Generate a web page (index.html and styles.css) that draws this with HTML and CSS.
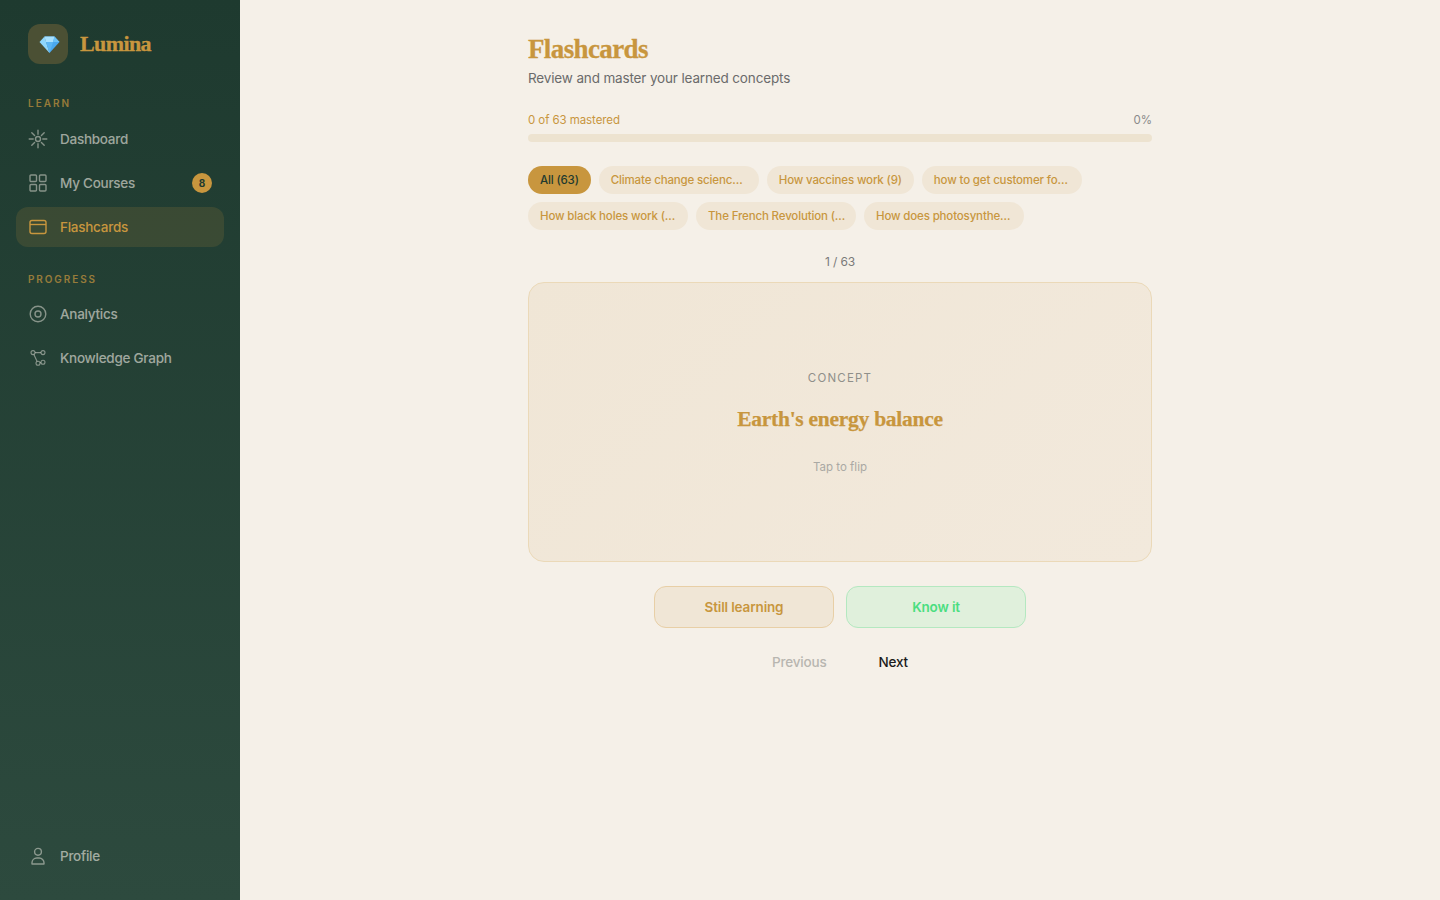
FILE: index.html
```html
<!DOCTYPE html>
<html lang="en">
<head>
<meta charset="utf-8">
<title>Lumina Flashcards</title>
<link rel="stylesheet" href="styles.css">
</head>
<body>
<div class="app">
  <aside class="sidebar">
    <div class="brand">
      <div class="logo">
        <svg class="gem" viewBox="0 0 20 20">
          <polygon points="5,2.5 15,2.5 20,8 10,19" fill="#4aa8ee"/>
          <polygon points="5,2.5 0,8 10,19" fill="#8fd6fb"/>
          <polygon points="5,2.5 15,2.5 13.5,8 6.5,8" fill="#a8e0fd"/>
          <polygon points="6.5,8 13.5,8 10,19" fill="#5cb6f3"/>
          <polygon points="15,2.5 20,8 13.5,8" fill="#6cc2f6"/>
        </svg>
      </div>
      <span class="brand-name">Lumina</span>
    </div>
    <div class="section-label">LEARN</div>
    <nav class="nav">
      <a class="nav-item">
        <svg class="icon" viewBox="0 0 20 20" fill="none" stroke="currentColor" stroke-width="1.4" stroke-linecap="round"><circle cx="10" cy="10" r="2.5"/><path d="M10 1.2v4M10 14.8v4M1.2 10h4M14.8 10h4M3.8 3.8l2.8 2.8M13.4 13.4l2.8 2.8M3.8 16.2l2.8-2.8M13.4 6.6l2.8-2.8"/></svg>
        <span>Dashboard</span>
      </a>
      <a class="nav-item">
        <svg class="icon" viewBox="0 0 20 20" fill="none" stroke="currentColor" stroke-width="1.4"><rect x="2" y="2" width="6.5" height="6.5" rx="1"/><rect x="11.5" y="2" width="6.5" height="6.5" rx="1"/><rect x="2" y="11.5" width="6.5" height="6.5" rx="1"/><rect x="11.5" y="11.5" width="6.5" height="6.5" rx="1"/></svg>
        <span>My Courses</span>
        <span class="badge">8</span>
      </a>
      <a class="nav-item active">
        <svg class="icon" viewBox="0 0 20 20" fill="none" stroke="currentColor" stroke-width="1.4"><rect x="2" y="3.5" width="16" height="13" rx="2"/><path d="M2 7.5h16"/></svg>
        <span>Flashcards</span>
      </a>
    </nav>
    <div class="section-label second">PROGRESS</div>
    <nav class="nav">
      <a class="nav-item">
        <svg class="icon" viewBox="0 0 20 20" fill="none" stroke="currentColor" stroke-width="1.4"><circle cx="10" cy="10" r="7.8"/><circle cx="10" cy="10" r="3"/></svg>
        <span>Analytics</span>
      </a>
      <a class="nav-item">
        <svg class="icon" viewBox="0 0 20 20" fill="none" stroke="currentColor" stroke-width="1.1"><circle cx="5" cy="4.6" r="2"/><circle cx="15" cy="4.6" r="2"/><circle cx="10" cy="15.2" r="2"/><circle cx="15" cy="14.2" r="2"/><path d="M7 4.6h6M5.9 6.4l3.2 7M12 14.8l1-.2"/></svg>
        <span>Knowledge Graph</span>
      </a>
    </nav>
    <div class="sidebar-foot">
      <a class="nav-item">
        <svg class="icon" viewBox="0 0 20 20" fill="none" stroke="currentColor" stroke-width="1.4"><circle cx="10" cy="5.8" r="3.4"/><path d="M4 18v-1.2a4.8 4.8 0 0 1 4.8-4.8h2.4a4.8 4.8 0 0 1 4.8 4.8V18z" stroke-linejoin="round"/></svg>
        <span>Profile</span>
      </a>
    </div>
  </aside>
  <main class="main">
    <div class="content">
      <h1 class="title">Flashcards</h1>
      <p class="subtitle">Review and master your learned concepts</p>
      <div class="progress-head">
        <span class="mastered">0 of 63 mastered</span>
        <span class="percent">0%</span>
      </div>
      <div class="track"></div>
      <div class="chips">
        <span class="chip selected">All (63)</span>
        <span class="chip long">Climate change scienc…</span>
        <span class="chip">How vaccines work (9)</span>
        <span class="chip long">how to get customer fo…</span>
        <span class="chip long">How black holes work (…</span>
        <span class="chip long">The French Revolution (…</span>
        <span class="chip long">How does photosynthe…</span>
      </div>
      <div class="counter">1 / 63</div>
      <div class="card">
        <div class="card-kind">CONCEPT</div>
        <div class="card-term">Earth's energy balance</div>
        <div class="card-hint">Tap to flip</div>
      </div>
      <div class="actions">
        <button class="action still">Still learning</button>
        <button class="action know">Know it</button>
      </div>
      <div class="pager">
        <button class="page prev">Previous</button>
        <button class="page next">Next</button>
      </div>
    </div>
  </main>
</div>
</body>
</html>
```

FILE: styles.css
```css
* { box-sizing: border-box; }
html, body { margin: 0; height: 100%; }
body {
  font-family: "Inter", "Noto Sans", sans-serif;
  background: #f5f0e8;
  color: #1a1a1a;
}
.app { display: flex; height: 900px; overflow: hidden; }

.sidebar {
  width: 240px;
  flex: none;
  display: flex;
  flex-direction: column;
  padding: 24px 16px 0;
  background: linear-gradient(180deg, #1e3a2f 0%, #2d4a3e 100%);
}
.brand { display: flex; align-items: center; gap: 12px; padding: 0 12px; height: 40px; }
.logo {
  width: 40px; height: 40px; border-radius: 12px;
  background: #4b5034;
  display: flex; align-items: center; justify-content: center;
}
.gem { width: 21px; height: 20px; margin-left: 3px; }
.brand-name {
  font-family: "Liberation Serif", serif;
  font-weight: 700; font-size: 22px; letter-spacing: -.6px; color: #c8963e;
  -webkit-text-stroke: .3px #c8963e;
}
.section-label {
  margin: 33px 0 0 12px;
  height: 12px;
  font-size: 10px; line-height: 12px; font-weight: 600;
  letter-spacing: 2px;
  color: #c8963e; opacity: .7;
}
.section-label.second { margin-top: 26px; letter-spacing: 1.9px; }
.nav { display: flex; flex-direction: column; gap: 4px; margin-top: 10px; }
.second + .nav { margin-top: 9px; }
.nav-item {
  height: 40px;
  display: flex; align-items: center; gap: 12px;
  padding: 0 12px;
  border-radius: 12px;
  font-size: 13.5px; font-weight: 500; letter-spacing: -.26px;
  color: rgba(245, 240, 232, .6);
}
.icon { width: 20px; height: 20px; flex: none; opacity: .8; }
.nav-item.active .icon { opacity: 1; }
.nav-item .badge {
  margin-left: auto;
  width: 20px; height: 20px; border-radius: 50%;
  background: #c8963e; color: #1e3a2f;
  font-size: 10px; font-weight: 700; letter-spacing: 0;
  display: flex; align-items: center; justify-content: center;
}
.nav-item.active { background: rgba(200, 150, 62, .15); color: #c8963e; }
.sidebar-foot { margin-top: auto; padding-bottom: 24px; }

.main { flex: 1; min-width: 0; }
.content { width: 624px; margin: 0 auto; padding-top: 32px; }
.title {
  margin: 0;
  font-family: "Liberation Serif", serif;
  font-weight: 700; font-size: 27px; line-height: 34px; letter-spacing: -.62px;
  -webkit-text-stroke: .3px #c8963e;
  color: #c8963e;
}
.subtitle { margin: 2px 0 0; font-size: 13.5px; line-height: 20px; letter-spacing: -.15px; color: #6b6b6b; }
.progress-head {
  display: flex; justify-content: space-between;
  margin-top: 24px;
  font-size: 11.5px; line-height: 16px; letter-spacing: -.08px;
}
.mastered { color: #c8963e; }
.percent { color: #8a8a8a; }
.track { height: 8px; margin-top: 6px; border-radius: 4px; background: #ede3d0; }
.chips { display: flex; flex-wrap: wrap; gap: 8px; margin-top: 24px; }
.chip {
  height: 28px; padding: 0 12px;
  border-radius: 14px;
  display: flex; align-items: center;
  font-size: 11.5px; font-weight: 500; letter-spacing: -.15px;
  white-space: nowrap;
  background: #f0e6d6; color: #c8963e;
}
.chip.long { width: 160px; }
.chip.selected { background: #c8963e; color: #1e3a2f; }
.counter { margin-top: 24px; text-align: center; font-size: 12px; line-height: 16px; letter-spacing: -.1px; color: #7a7a7a; }
.card {
  height: 280px; margin-top: 12px;
  border: 1px solid #ebd9b8; border-radius: 16px;
  background: linear-gradient(135deg, #f0e6d6 0%, #f2e9dc 100%);
  display: flex; flex-direction: column; align-items: center;
}
.card-kind { margin-top: 87px; font-size: 11.5px; line-height: 16px; letter-spacing: 1.2px; color: #8f8f8a; }
.card-term {
  margin-top: 19px;
  font-family: "Liberation Serif", serif;
  font-weight: 700; font-size: 21.5px; line-height: 28px; letter-spacing: -.27px;
  -webkit-text-stroke: .25px #c8963e;
  color: #c8963e;
}
.card-hint { margin-top: 26px; font-size: 11.5px; line-height: 16px; color: #aaa9a4; }
.actions { display: flex; justify-content: center; gap: 12px; margin-top: 24px; }
.action {
  width: 180px; height: 42px;
  border-radius: 12px;
  font-family: inherit; font-size: 13.5px; font-weight: 600; letter-spacing: -.15px;
}
.still { background: #f0e6d6; border: 1px solid #e8cfa6; color: #c8963e; }
.know { background: #e0f0dc; border: 1px solid #b4e8c0; color: #4ade80; }
.pager { display: flex; justify-content: center; gap: 4px; margin-top: 14px; }
.page {
  height: 40px; padding: 0 24px;
  border: 0; background: none;
  font-family: inherit; font-size: 13.5px; font-weight: 500; letter-spacing: -.2px;
}
.prev { color: #b8b6b0; }
.next { color: #1a1a1a; }
```
